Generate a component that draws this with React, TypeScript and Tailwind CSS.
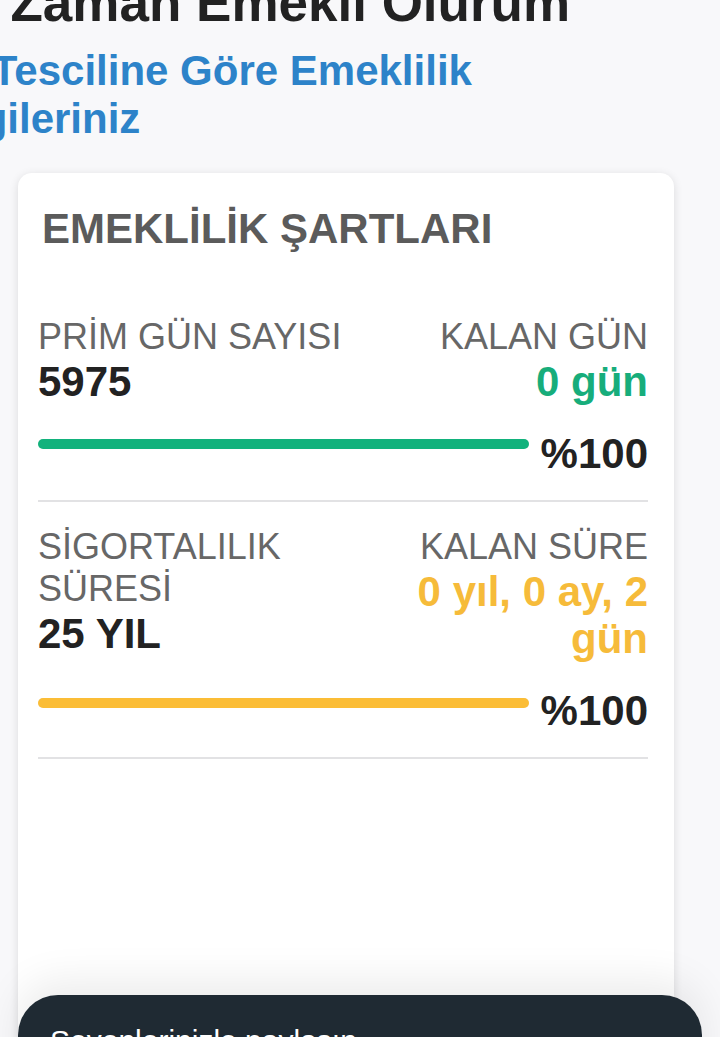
import React from 'react';

type Row = {
  label: string;
  value: string;
  rightLabel: string;
  rightValue: string;
  tone: 'green' | 'yellow';
  percent: number;
};

const rows: Row[] = [
  { label: 'PRİM GÜN SAYISI', value: '5975', rightLabel: 'KALAN GÜN', rightValue: '0 gün', tone: 'green', percent: 100 },
  { label: 'SİGORTALILIK SÜRESİ', value: '25 YIL', rightLabel: 'KALAN SÜRE', rightValue: '0 yıl, 0 ay, 2 gün', tone: 'yellow', percent: 100 },
];

const ConditionRow = ({ row, first }: { row: Row; first: boolean }) => {
  const valueColor = row.tone === 'green' ? 'text-[#17ad7b]' : 'text-[#f6bb3a]';
  const barColor = row.tone === 'green' ? 'bg-[#12b27c]' : 'bg-[#fbbd36]';

  return (
    <div className={first ? 'mt-[62px]' : 'mt-[24px]'}>
      <div className="flex justify-between gap-4">
        <div className="flex-1 min-w-0">
          <p className="text-[36px] leading-[42px] text-[#676767]">{row.label}</p>
          <p className="text-[42px] leading-[47px] font-bold text-[#222]">{row.value}</p>
        </div>
        <div className="max-w-[260px] text-right">
          <p className="text-[36px] leading-[42px] text-[#676767]">{row.rightLabel}</p>
          <p className={`text-[42px] leading-[47px] font-bold ${valueColor}`}>{row.rightValue}</p>
        </div>
      </div>

      <div className="mt-[25px] flex items-start gap-[12px]">
        <div className={`${first ? 'mt-[9px]' : 'mt-[11px]'} flex-1 h-[10px] rounded-full bg-[#eeeeee]`}>
          <div className={`h-full rounded-full ${barColor}`} style={{ width: `${row.percent}%` }} />
        </div>
        <span className="text-[42px] leading-[47px] font-bold text-[#222]">%{row.percent}</span>
      </div>

      <div className="mt-[23px] h-[2px] bg-[#e2e2e4]" />
    </div>
  );
};

const App = () => {
  return (
    <div className="relative w-[720px] h-[1037px] overflow-hidden bg-[#f8f8fa] font-['Liberation_Sans',Arial,sans-serif]">
      {/* page header, scrolled partly out of view */}
      <div className="-ml-[72px] -mt-[27px] w-[680px]">
        <h1 className="text-[53px] leading-[60px] font-bold text-[#222] whitespace-nowrap">
          Ne Zaman Emekli Olurum
        </h1>
        <h2 className="mt-[14px] text-[42px] leading-[48px] font-bold text-[#2d83c9]">
          4A Tesciline Göre Emeklilik Bilgileriniz
        </h2>
      </div>

      <div className="mt-[30px] ml-[18px] w-[656px] rounded-[14px] bg-white shadow-[0_2px_10px_rgba(0,0,0,0.12)] pl-5 pr-[26px] pt-[31px] pb-[300px]">
        <h3 className="ml-1 text-[42px] leading-[50px] font-bold text-[#5b5b5b]">EMEKLİLİK ŞARTLARI</h3>
        {rows.map((row, i) => (
          <ConditionRow key={row.label} row={row} first={i === 0} />
        ))}
      </div>

      {/* bottom sheet */}
      <div className="absolute left-[18px] right-[18px] top-[995px] h-[120px] rounded-t-[40px] bg-[#1f2a33] shadow-[0_-14px_40px_rgba(0,0,0,0.08)] pl-8 pt-[28px]">
        <p className="text-[30px] leading-[36px] text-white">Sevenlerinizle paylaşın</p>
      </div>
    </div>
  );
};

export default App;
